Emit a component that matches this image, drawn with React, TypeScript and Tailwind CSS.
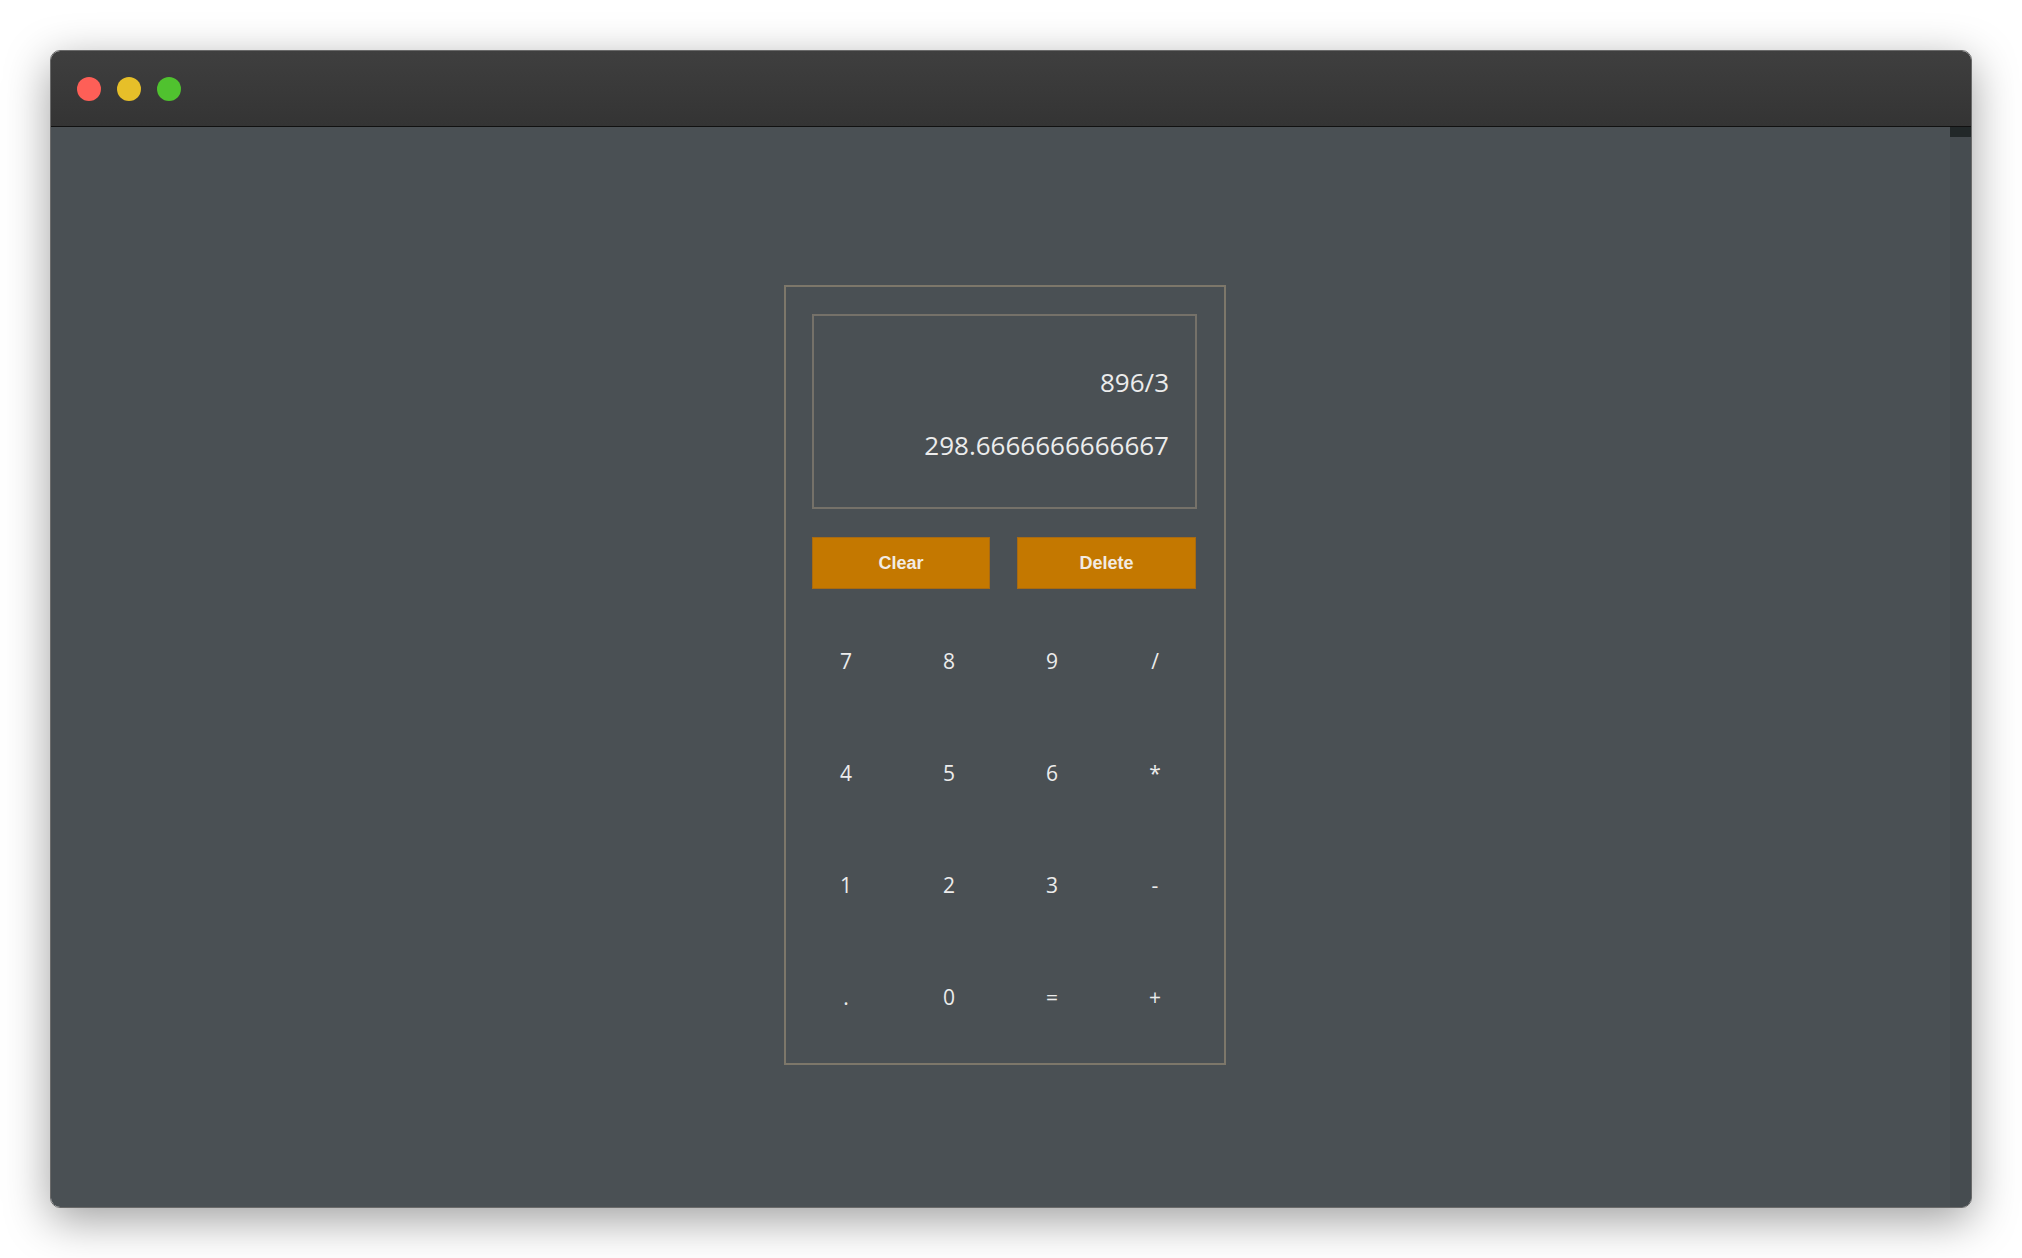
import React from "react";

const keys = ["7", "8", "9", "/", "4", "5", "6", "*", "1", "2", "3", "-", ".", "0", "=", "+"];

export default function App() {
  return (
    <div className="w-full h-[1258px] bg-white p-[50px]">
      <div className="h-full flex flex-col rounded-[10px] overflow-hidden shadow-[0_12px_45px_rgba(0,0,0,0.38)] border border-[#6a6a6a]">
        <div className="h-[76px] shrink-0 flex items-center gap-[16px] pl-[26px] bg-gradient-to-b from-[#3f3f3f] to-[#343434] border-b border-[#111]">
          <div className="w-[24px] h-[24px] rounded-full bg-[#fe5f57]" />
          <div className="w-[24px] h-[24px] rounded-full bg-[#e6bf29]" />
          <div className="w-[24px] h-[24px] rounded-full bg-[#50c22f]" />
        </div>
        <div className="flex-1 flex bg-[#4a5054]">
          <div className="flex-1 pl-[733px] pt-[158px]">
            <div className="w-[442px] h-[780px] border-2 border-[#7d776a] pl-[26px] pt-[27px]">
              <div
                className="w-[385px] h-[195px] border-2 border-[#757169] pr-[26px] pt-[48px] flex flex-col items-end gap-[27px] text-[#ececec] text-[26px]"
                style={{ fontFamily: '"Open Sans", "Noto Sans", sans-serif' }}
              >
                <div className="leading-[36px] h-[36px]">896/3</div>
                <div className="leading-[36px] h-[36px]">298.6666666666667</div>
              </div>
              <div
                className="mt-[28px] w-[385px] flex gap-[27px] text-[18px] font-bold text-[#f2ebe3]"
                style={{ fontFamily: '"Liberation Sans", Arial, sans-serif' }}
              >
                <div className="w-[178px] h-[52px] bg-[#c47800] border border-[#a86a12] flex items-center justify-center">
                  Clear
                </div>
                <div className="w-[179px] h-[52px] bg-[#c47800] border border-[#a86a12] flex items-center justify-center">
                  Delete
                </div>
              </div>
              <div
                className="mt-[17px] grid grid-cols-[68px_68px_68px_68px] gap-x-[35px] auto-rows-[112px] text-[21px] text-[#ececec]"
                style={{ fontFamily: '"Open Sans", "Noto Sans", sans-serif' }}
              >
                {keys.map((k) => (
                  <div key={k} className="flex items-center justify-center">
                    {k}
                  </div>
                ))}
              </div>
            </div>
          </div>
          <div className="w-[21px] bg-[#464c50]">
            <div className="h-[10px] bg-[#222829]" />
          </div>
        </div>
      </div>
    </div>
  );
}
